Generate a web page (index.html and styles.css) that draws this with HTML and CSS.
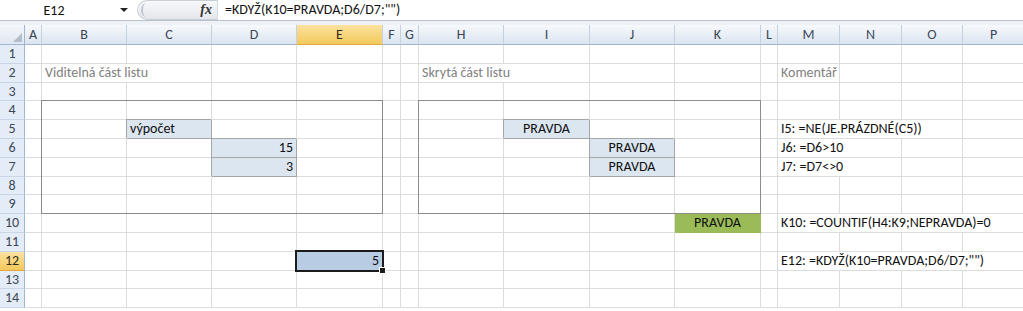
FILE: index.html
```html
<!DOCTYPE html>
<html lang="cs">
<head>
  <meta charset="UTF-8">
  <meta name="viewport" content="width=device-width, initial-scale=1.0">
  <title>Skrytá část listu</title>
  <link rel="stylesheet" href="styles.css">
</head>
<body>
  <div class="formula-bar">
    <div class="name-box">
      <span class="name">E12</span>
      <span class="caret"></span>
    </div>
    <div class="grip">
      <span class="knob"></span>
      <span class="fx">fx</span>
    </div>
    <div class="formula">=KDYŽ(K10=PRAVDA;D6/D7;"")</div>
  </div>
  <div class="bar-gap"></div>

  <div class="sheet" id="sheet"></div>

  <script>
    const sheet = document.getElementById("sheet");
    const letters = "ABCDEFGHIJKLMNOP".split("");

    // cell contents, keyed by address
    const cells = {
      B2: { text: "Viditelná část listu", cls: "note", span: 2 },
      H2: { text: "Skrytá část listu", cls: "note", span: 2 },
      M2: { text: "Komentář", cls: "note" },
      C5: { text: "výpočet", cls: "fill" },
      I5: { text: "PRAVDA", cls: "fill center" },
      M5: { text: "I5: =NE(JE.PRÁZDNÉ(C5))", span: 3 },
      D6: { text: "15", cls: "fill right" },
      J6: { text: "PRAVDA", cls: "fill center" },
      M6: { text: "J6: =D6>10", span: 2 },
      D7: { text: "3", cls: "fill right" },
      J7: { text: "PRAVDA", cls: "fill center" },
      M7: { text: "J7: =D7<>0", span: 2 },
      K10: { text: "PRAVDA", cls: "good center" },
      M10: { text: "K10: =COUNTIF(H4:K9;NEPRAVDA)=0", span: 4 },
      E12: { text: "5", cls: "active right" },
      M12: { text: "E12: =KDYŽ(K10=PRAVDA;D6/D7;\"\")", span: 4 }
    };

    // every cell gets its own grid area, so the outlines can overlap them
    function add(cls, row, col, span, text) {
      const div = document.createElement("div");
      div.className = cls;
      div.style.gridArea = `${row} / ${col} / span 1 / span ${span}`;
      if (text) div.textContent = text;
      sheet.appendChild(div);
      return div;
    }

    const corner = add("corner", 1, 1, 1);
    corner.innerHTML = '<svg width="10" height="10" viewBox="0 0 10 10"><polygon points="10,1 10,10 1,10" fill="#b4bcc8"/></svg>';
    letters.forEach((l, i) => add(l === "E" ? "col-head current" : "col-head", 1, i + 2, 1, l));

    for (let r = 1; r <= 14; r++) {
      add(r === 12 ? "row-head current" : "row-head", r + 1, 1, 1, String(r));
      let skip = 0;
      letters.forEach((l, i) => {
        if (skip > 0) { skip--; return; }
        const data = cells[l + r];
        if (!data) { add("cell", r + 1, i + 2, 1); return; }
        const span = data.span || 1;
        skip = span - 1;
        add("cell " + (data.cls || ""), r + 1, i + 2, span, data.text);
      });
    }

    // outlines drawn over the grid
    const outline = document.createElement("div");
    outline.className = "box box-left";
    sheet.appendChild(outline);
    const hidden = document.createElement("div");
    hidden.className = "box box-right";
    sheet.appendChild(hidden);
    const selection = document.createElement("div");
    selection.className = "selection";
    selection.innerHTML = '<span class="handle"></span>';
    sheet.appendChild(selection);
  </script>
</body>
</html>
```

FILE: styles.css
```css
body {
  margin: 0;
  background: #fff;
  font-family: Carlito, Lato, "Open Sans", sans-serif;
  overflow: hidden;
}

/* formula bar */
.formula-bar {
  display: flex;
  height: 20px;
  border-bottom: 1px solid #b9c3cf;
  background: #fff;
}
.name-box {
  width: 133px;
  display: flex;
  align-items: center;
}
.name {
  flex: 1;
  text-align: center;
  font-size: 14px;
  color: #111;
  padding-right: 12px;
}
.caret {
  width: 0;
  height: 0;
  border-left: 4px solid transparent;
  border-right: 4px solid transparent;
  border-top: 4px solid #222;
  margin-right: 5px;
}
.grip {
  margin-left: 4px;
  width: 80px;
  display: flex;
  align-items: center;
  justify-content: space-between;
  border-radius: 10px 0 0 10px;
  background: linear-gradient(#f7f8fa, #e4e7ec);
  border: 1px solid #c9ced6;
  border-right: none;
  box-sizing: border-box;
  padding: 0 5px 0 3px;
}
.knob {
  width: 10px;
  height: 14px;
  border-radius: 50%;
  border-left: 2px solid #c0c5cc;
  box-sizing: border-box;
}
.fx {
  font-family: "Liberation Serif", serif;
  font-style: italic;
  font-weight: bold;
  font-size: 14px;
  color: #333;
}
.formula {
  flex: 1;
  border-left: 1px solid #d5dbe3;
  padding-left: 7px;
  font-size: 14px;
  line-height: 20px;
  color: #111;
}
.bar-gap {
  height: 4px;
  background: #eef1f6;
}

/* worksheet grid */
.sheet {
  display: grid;
  grid-template-columns: 25px 17px 85px 85px 85px 86px 18px 18px 85px 86px 85px 86px 17px 62px 62px 61px 62px;
  grid-template-rows: 20px repeat(14, 18.8px);
  font-size: 14px;
  color: #111;
}
.corner {
  background: linear-gradient(#f4f7fb, #dfe7f1);
  border-right: 1px solid #9eb6ce;
  border-bottom: 1px solid #9eb6ce;
  display: flex;
  align-items: flex-end;
  justify-content: flex-end;
  padding: 0 2px 2px 0;
}
.col-head {
  background: linear-gradient(#f6f9fc, #dbe4f0);
  border-right: 1px solid #c3d1e2;
  border-bottom: 1px solid #9eb6ce;
  text-align: center;
  line-height: 19px;
  color: #3b4656;
}
.row-head {
  background: #e4ecf7;
  border-right: 1px solid #9eb6ce;
  border-bottom: 1px solid #c8d6e8;
  text-align: center;
  line-height: 18px;
  color: #3b4656;
}
.col-head.current,
.row-head.current {
  background: linear-gradient(#fbe29f, #f4c95c);
  border-bottom-color: #e3a83c;
  color: #2f2a20;
}
.cell {
  border-right: 1px solid #dadcdd;
  border-bottom: 1px solid #dadcdd;
  padding: 0 3px;
  line-height: 18px;
  white-space: nowrap;
}
.note {
  color: #7f7f7f;
}
.right {
  text-align: right;
}
.center {
  text-align: center;
}
.fill {
  background: #dce6f1;
  border-right-color: #a6a6a6;
  border-bottom-color: #a6a6a6;
  box-shadow: -1px -1px 0 #a6a6a6;
}
.good {
  background: #9bbb59;
  border-right-color: #9bbb59;
  border-bottom-color: #9bbb59;
}
.active {
  background: #b8cce4;
}

/* outlined areas */
.box {
  border: 1px solid #8c8c8c;
  margin: -1px 0 0 -1px;
  grid-row: 5 / 11;
}
.box-left {
  grid-column: 3 / 7;
}
.box-right {
  grid-column: 9 / 13;
}
.selection {
  grid-column: 6 / 7;
  grid-row: 13 / 14;
  margin: -2px -1px -1px -2px;
  border: 2px solid #1c1c1c;
  position: relative;
}
.handle {
  position: absolute;
  right: -4px;
  bottom: -4px;
  width: 5px;
  height: 5px;
  background: #1c1c1c;
  border: 1px solid #fff;
}
```
